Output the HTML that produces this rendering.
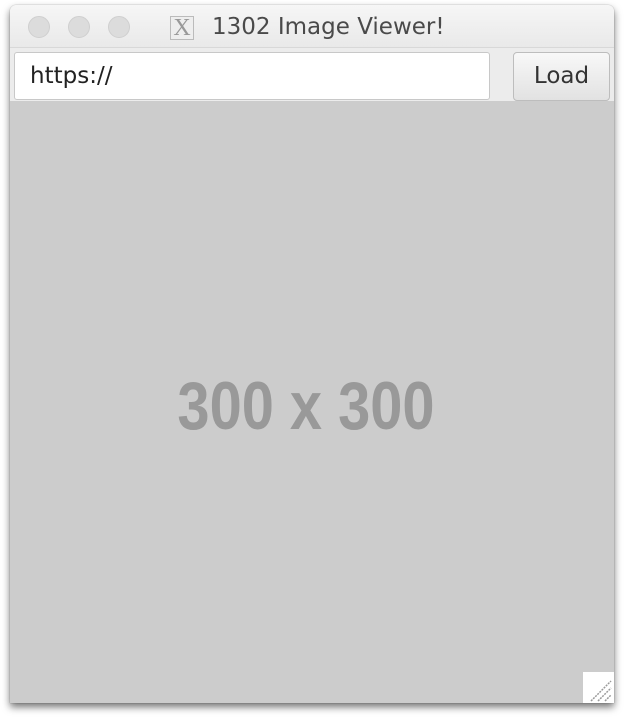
<!DOCTYPE html>
<html><head><style>
body{margin:0;width:624px;height:720px;background:#fff;position:relative;overflow:hidden;font-family:"Liberation Sans",sans-serif}
.win{position:absolute;left:10px;top:5px;width:604px;height:698px;background:#ececec;border-radius:6px 6px 0 0;box-shadow:0 4px 8px rgba(0,0,0,.55),0 0 1px rgba(0,0,0,.4);overflow:hidden}
.title{position:absolute;left:0;top:0;width:604px;height:42px;background:linear-gradient(#f6f6f6,#e9e9e9);border-bottom:1px solid #d8d8d8}
.dot{position:absolute;top:11px;width:22px;height:22px;border-radius:50%;background:#dcdcdc;border:1px solid #cfcfcf;box-sizing:border-box}
.ttl{position:absolute;left:202px;top:9px;font-size:23px;color:#4a4a4a;font-family:"DejaVu Sans",sans-serif}
.xi{position:absolute;left:160px;top:11px;width:24px;height:24px;border:1px solid #bbb;box-sizing:border-box;font-family:"Liberation Serif",serif;font-size:24px;line-height:22px;text-align:center;color:#999;background:#eee}
.field{position:absolute;left:4px;top:47px;width:476px;height:48px;background:#fff;border:1px solid #c8c8c8;border-radius:3px;box-sizing:border-box;font-family:"DejaVu Sans",sans-serif;font-size:23px;color:#222;line-height:46px;padding-left:15px}
.btn{position:absolute;left:503px;top:47px;width:97px;height:49px;background:linear-gradient(#f8f8f8,#e2e2e2);border:1px solid #bdbdbd;border-radius:4px;box-sizing:border-box;font-family:"DejaVu Sans",sans-serif;font-size:23px;color:#333;text-align:center;line-height:46px}
.img{position:absolute;left:0;top:96px;width:604px;height:602px;background:#cccccc}
.txt{position:absolute;left:-6px;width:604px;top:266px;text-align:center;font-weight:bold;font-size:68px;color:#999;transform:scaleX(.85)}
.rz{position:absolute;left:573px;top:667px;width:31px;height:31px;background:#fff}
</style></head><body>
<div class="win">
<div class="title">
<div class="dot" style="left:18px"></div><div class="dot" style="left:58px"></div><div class="dot" style="left:98px"></div>
<div class="xi">X</div>
<div class="ttl">1302 Image Viewer!</div>
</div>
<div class="field">https://</div>
<div class="btn">Load</div>
<div class="img"><div class="txt">300 x 300</div></div>
<div class="rz"><svg width="31" height="31"><g stroke="#999" stroke-width="1.5" stroke-dasharray="2 1"><line x1="8" y1="29" x2="28" y2="9"/><line x1="15" y1="29" x2="28" y2="16"/><line x1="22" y1="29" x2="28" y2="23"/></g></svg></div>
</div>
</body></html>
